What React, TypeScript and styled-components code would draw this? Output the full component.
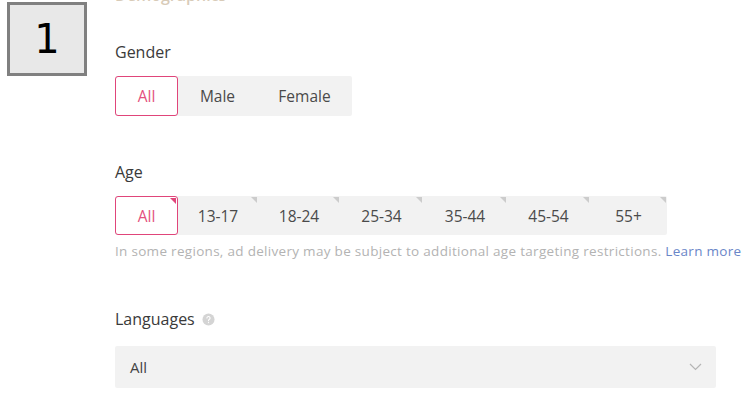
import styled, { createGlobalStyle } from 'styled-components'

const GlobalStyle = createGlobalStyle`
  html, body {
    margin: 0;
    padding: 0;
    background: #ffffff;
  }
  body {
    font-family: "Open Sans", "Noto Sans", sans-serif;
    color: #333333;
  }
`

const Page = styled.div`
  display: grid;
  grid-template-columns: 80px 1fr;
  column-gap: 28px;
  align-items: start;
  padding: 0 0 0 7px;
  height: 400px;
  overflow: hidden;
`

const StepBadge = styled.div`
  box-sizing: border-box;
  display: flex;
  align-items: center;
  justify-content: center;
  width: 80px;
  height: 74px;
  margin-top: 2px;
  background: #e8e8e8;
  border: 3px solid #808080;
  color: #000000;
  font-family: "DejaVu Sans", sans-serif;
  font-size: 40px;
`

const Form = styled.div`
  display: flex;
  flex-direction: column;
  align-items: flex-start;
`

const SectionTitle = styled.div`
  font-size: 16px;
  line-height: 16px;
  font-weight: 600;
  color: #d8cbb8;
  margin-top: -13px;
  height: 16px;
`

const Label = styled.div<{ $top: number; $bottom?: number }>`
  display: flex;
  align-items: center;
  gap: 7px;
  font-size: 16px;
  line-height: 22px;
  color: #3a3a3a;
  margin-top: ${({ $top }) => $top}px;
  margin-bottom: ${({ $bottom }) => $bottom ?? 13}px;
`

const Segmented = styled.div<{ $height: number }>`
  display: inline-flex;
  align-items: stretch;
  height: ${({ $height }) => $height}px;
  background: #f2f2f2;
  border-radius: 2px;
`

const SegmentButton = styled.div<{ $active?: boolean; $marked?: boolean; $width: number }>`
  position: relative;
  box-sizing: border-box;
  display: flex;
  align-items: center;
  justify-content: center;
  width: ${({ $width }) => $width}px;
  font-size: 15.5px;
  color: ${({ $active }) => ($active ? '#e4507e' : '#4a4a4a')};
  background: ${({ $active }) => ($active ? '#ffffff' : 'transparent')};
  border: 1px solid ${({ $active }) => ($active ? '#e0457a' : 'transparent')};
  border-radius: 3px;

  &::after {
    content: '';
    display: ${({ $marked }) => ($marked ? 'block' : 'none')};
    position: absolute;
    top: ${({ $active }) => ($active ? 1 : 0)}px;
    right: ${({ $active }) => ($active ? 1 : 0)}px;
    width: 0;
    height: 0;
    border-top: 6px solid ${({ $active }) => ($active ? '#e0457a' : '#cccccc')};
    border-left: 6px solid transparent;
  }
`

const Note = styled.div`
  margin-top: 7px;
  font-size: 13.5px;
  letter-spacing: 0.3px;
  line-height: 18px;
  color: #b3b3b3;
  white-space: nowrap;
`

const NoteLink = styled.span`
  color: #6a86c8;
`

const HelpIcon = styled.svg`
  width: 13px;
  height: 13px;
`

const Select = styled.div`
  box-sizing: border-box;
  display: flex;
  align-items: center;
  justify-content: space-between;
  width: 601px;
  height: 42px;
  padding: 0 14px 0 15px;
  background: #f2f2f2;
  border-radius: 2px;
  font-size: 15px;
  color: #444444;
`

const Chevron = styled.svg`
  width: 13px;
  height: 8px;
`

const genders = [
  { label: 'All', width: 63 },
  { label: 'Male', width: 79 },
  { label: 'Female', width: 95 },
]

const ages = [
  { label: 'All', width: 63 },
  { label: '13-17', width: 80 },
  { label: '18-24', width: 82 },
  { label: '25-34', width: 83 },
  { label: '35-44', width: 84 },
  { label: '45-54', width: 83 },
  { label: '55+', width: 77 },
]

export default function App() {
  return (
    <>
      <GlobalStyle />
      <Page>
        <StepBadge>1</StepBadge>
        <Form>
          <SectionTitle>Demographics</SectionTitle>

          <Label $top={38}>Gender</Label>
          <Segmented $height={40}>
            {genders.map((g, i) => (
              <SegmentButton key={g.label} $width={g.width} $active={i === 0}>
                {g.label}
              </SegmentButton>
            ))}
          </Segmented>

          <Label $top={45}>Age</Label>
          <Segmented $height={39}>
            {ages.map((a, i) => (
              <SegmentButton key={a.label} $width={a.width} $active={i === 0} $marked>
                {a.label}
              </SegmentButton>
            ))}
          </Segmented>
          <Note>
            In some regions, ad delivery may be subject to additional age targeting restrictions.{' '}
            <NoteLink>Learn more</NoteLink>
          </Note>

          <Label $top={48} $bottom={16}>
            Languages
            <HelpIcon viewBox="0 0 14 14">
              <circle cx="7" cy="7" r="6.5" fill="#d4d4d4" />
              <path d="M5.3 5.4a1.7 1.7 0 1 1 2.4 1.6c-.5.2-.7.5-.7 1v.4" stroke="#ffffff" strokeWidth="1.2" fill="none" strokeLinecap="round" />
              <circle cx="7" cy="10.3" r="0.7" fill="#ffffff" />
            </HelpIcon>
          </Label>
          <Select>
            <span>All</span>
            <Chevron viewBox="0 0 13 8">
              <polyline points="1,1 6.5,6.5 12,1" fill="none" stroke="#b5b5b5" strokeWidth="1.2" />
            </Chevron>
          </Select>
        </Form>
      </Page>
    </>
  )
}
